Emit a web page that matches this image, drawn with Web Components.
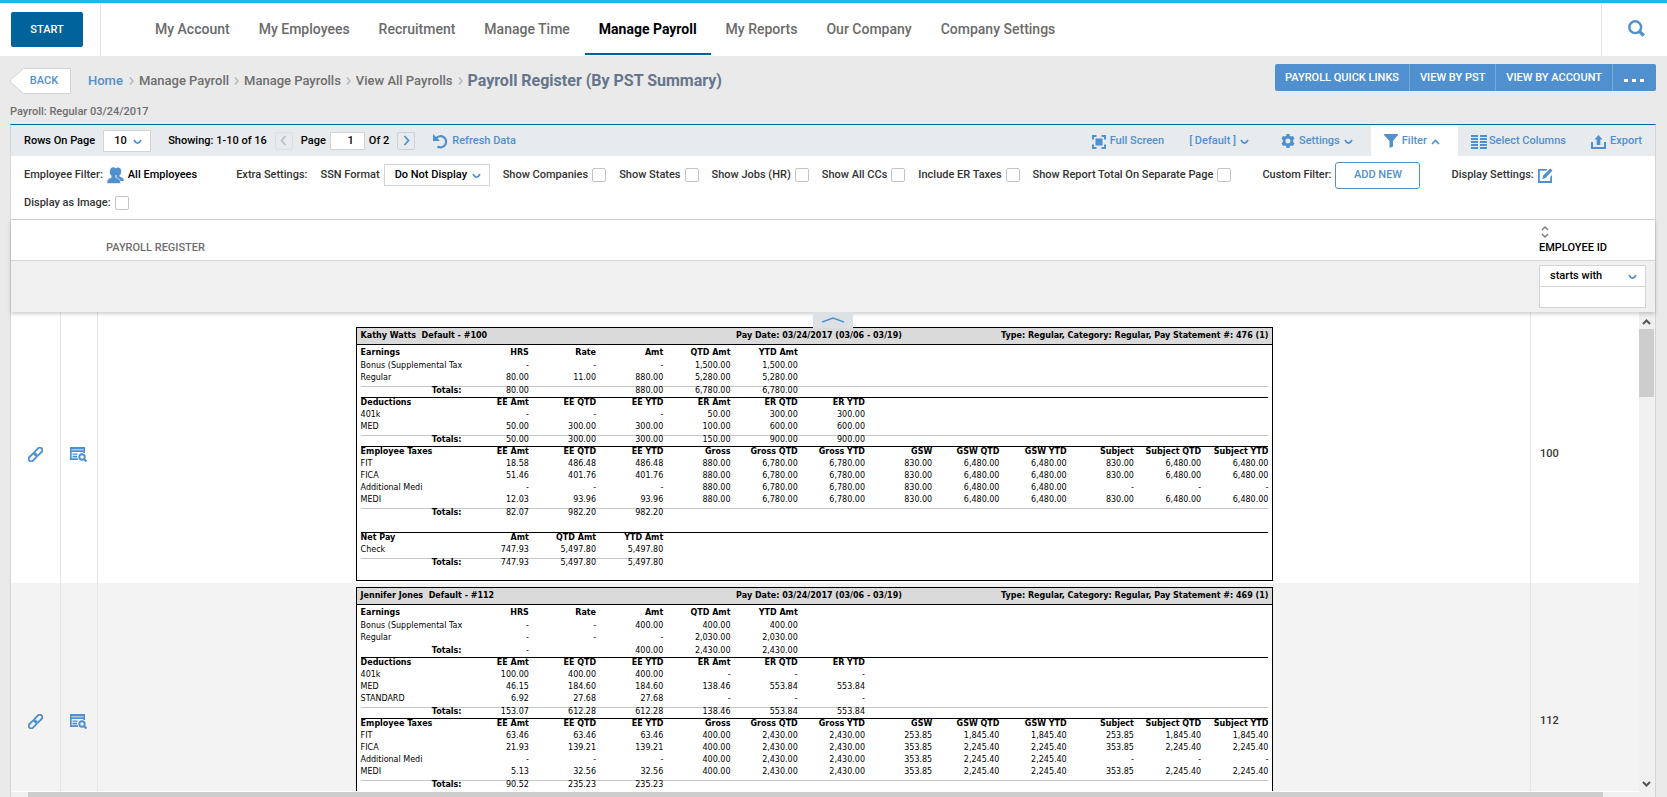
<!DOCTYPE html>
<html lang="en">
<head>
<meta charset="utf-8">
<title>Payroll Register (By PST Summary)</title>
<style>
  :root {
    --blue: #5090cf;
    --navy: #00639b;
    --line: #d4d4d4;
    --page: #eaeaea;
  }
  body {
    margin: 0;
    height: 100vh;
    display: flex;
    flex-direction: column;
    overflow: hidden;
    background: var(--page);
    color: #333;
    font: 500 11px/16px Roboto, "Liberation Sans", sans-serif;
  }
</style>
</head>
<body>
<app-header></app-header>
<page-heading></page-heading>
<report-panel>
  <tool-bar slot="tools"></tool-bar>
  <filter-bar slot="filters"></filter-bar>
  <register-grid></register-grid>
</report-panel>

<script>
function createComponent({ name, styles, template }) {
  customElements.define(name, class extends HTMLElement {
    connectedCallback() {
      if (this.shadowRoot) return;
      const shadow = this.attachShadow({ mode: 'open' });
      const base = `*, *::before { box-sizing: border-box; }
        button, input, select { font: inherit; color: inherit; margin: 0; }
        a { color: inherit; text-decoration: none; }`;
      shadow.innerHTML = `<style>${base}${styles}</style>${template(this)}`;
    }
  });
}

// every icon: [width, height, markup]
const icons = {
  search: [17, 17, '<circle cx="7.200" cy="7.200" r="5.900" fill="none" stroke="currentColor" stroke-width="2.400"/><path d="M11.500 11.500l4.300 4.200" stroke="currentColor" stroke-width="3.200"/>'],
  down: [9, 6, '<path d="M1 1c1 1.800 2 2.800 3.500 3.300C6 3.800 7 2.800 8 1" fill="none" stroke="currentColor" stroke-width="1.700"/>'],
  up: [9, 6, '<path d="M1 5l3.500-3.500L8 5" fill="none" stroke="currentColor" stroke-width="1.600"/>'],
  left: [7, 11, '<path d="M5.500 1L1.500 5.500l4 4.500" fill="none" stroke="currentColor" stroke-width="1.500"/>'],
  right: [7, 11, '<path d="M1.500 1l4 4.500-4 4.500" fill="none" stroke="currentColor" stroke-width="1.800"/>'],
  crumb: [5, 8, '<path d="M1 .5L4 4 1 7.500" fill="none" stroke="currentColor" stroke-width="1.300"/>'],
  refresh: [15, 15, '<path d="M3 4.500A5.600 5.600 0 1 1 4.500 12.500" fill="none" stroke="currentColor" stroke-width="2.200"/><path d="M0 0v7h7z" fill="currentColor"/>'],
  people: [17, 17, '<g fill="currentColor"><ellipse cx="11" cy="4.500" rx="3.200" ry="4"/><path d="M9.500 7h3v2.500c2 .8 4.200 1.200 4.500 4.500H9z"/><g stroke="#fff" stroke-width=".6"><path d="M4.200 8h4.600v2.500c2.500.9 4.600 1.500 4.900 6H-.3c.3-4.500 2-5.100 4.500-6z"/></g><ellipse cx="6.300" cy="4.800" rx="3.600" ry="4.600"/></g>'],
  fullscreen: [14, 14, '<g fill="currentColor"><path d="M0 0h4.500v2H2v2.500H0zM9.500 0H14v4.500h-2V2H9.500zM0 9.500h2V12h2.500v2H0zM12 9.500h2V14H9.500v-2H12z"/><path d="M3.500 3.500h7v7h-7z"/></g>'],
  gear: [14, 14, '<path fill="currentColor" fill-rule="evenodd" d="M5.500 0h3l.4 2 1.200.6L12 2l1.500 2.500L12.200 6v2l1.300 1.500L12 12l-1.900-.6-1.200.6-.4 2h-3l-.4-2-1.200-.6L2 12 .5 9.500 1.800 8V6L.5 4.500 2 2l1.900.6L5.100 2zM7 4.500a2.500 2.500 0 1 0 0 5 2.500 2.500 0 0 0 0-5z"/>'],
  funnel: [14, 14, '<path fill="currentColor" d="M0 0h14v1L9 7v5.500L5.500 14V7L0 1z"/>'],
  columns: [16, 14, '<path fill="currentColor" d="M0 0h7v2H0zM9 0h7v2H9zM0 3h7v2H0zM9 3h7v2H9zM0 6h7v2H0zM9 6h7v2H9zM0 9h7v2H0zM9 9h7v2H9zM0 12h7v2H0zM9 12h7v2H9z"/>'],
  exportUp: [15, 14, '<g fill="currentColor"><path d="M0 7h2v5h11V7h2v7H0z"/><path d="M7.500 0l4 4.500H9.300V10H5.700V4.500H3.500z"/></g>'],
  edit: [15, 15, '<g fill="currentColor"><path d="M0 1h9.500L8 2.700H1.800V13h10.400V9l1.800-2v8H0z"/><path d="M12.300.5l2.200 2-6.700 7.300-3.600 1.500 1-3.700z"/></g>'],
  link: [15, 15, '<g fill="none" stroke="currentColor" stroke-width="1.900"><rect x="-4.600" y="-2.500" width="9.200" height="5" rx="2.500" transform="translate(10.300 4.700) rotate(-45)"/><rect x="-4.600" y="-2.500" width="9.200" height="5" rx="2.500" transform="translate(4.700 10.300) rotate(-45)"/></g>'],
  preview: [17, 15, '<g fill="currentColor"><path d="M0 0h15v6h-1.700V5H1.700v6.300H8V13H0z"/><path d="M2.500 6.500h5v1.300h-5zM2.500 8.700h4.500v1.800H2.500z"/></g><path fill="#fff" d="M1.500 2.300h12v1h-12z" opacity=".75"/><circle cx="12" cy="10" r="2.700" fill="none" stroke="currentColor" stroke-width="1.900"/><path d="M14 12l2.500 2.500" stroke="currentColor" stroke-width="2.200"/>'],
  sort: [8, 12, '<path d="M1 4l3-3 3 3M1 8l3 3 3-3" fill="none" stroke="#777" stroke-width="1.400"/>'],
  handle: [22, 6, '<path d="M0 5l11-4 11 4" fill="none" stroke="currentColor" stroke-width="1.500"/>'],
  back: [61, 26, '<path d="M13.500.5h47v25h-47L1 14.500q-1-1.500 0-3z" fill="#fff" stroke="#d4d4d4"/>']
};

createComponent({
  name: 'ui-icon',
  styles: ':host { display: inline-flex; flex: none; color: var(--blue); }',
  template: el => {
    const [w, h, shape] = icons[el.getAttribute('name')];
    return `<svg width="${w}" height="${h}" viewBox="0 0 ${w} ${h}" aria-hidden="true">${shape}</svg>`;
  }
});

// box with a chevron around a native select passed in the slot
createComponent({
  name: 'select-box',
  styles: `
    :host { display: grid; align-items: center; background: #fff; border: 1px solid var(--line); color: #000; }
    ::slotted(select) { grid-area: 1 / 1; appearance: none; border: 0; background: none; outline: 0;
      width: 100%; height: 20px; padding: 0 18px 0 10px; font: inherit; color: inherit; }
    ui-icon { grid-area: 1 / 1; justify-self: end; margin: 2px 8px 0 0; pointer-events: none; }`,
  template: () => '<slot></slot><ui-icon name="down"></ui-icon>'
});

createComponent({
  name: 'check-option',
  styles: `
    :host { display: flex; align-items: center; }
    label { display: flex; align-items: center; gap: 4px; white-space: nowrap; }
    input { appearance: none; width: 14px; height: 14px; border: 1px solid #c4c4c4; border-radius: 2px; background: #fff; }`,
  template: () => '<label><slot></slot><input type="checkbox"></label>'
});

createComponent({
  name: 'app-header',
  styles: `
    :host { display: flex; flex: none; height: 56px; background: #fff; border-top: 3px solid #18bbe0; box-sizing: border-box; }
    .start { display: flex; align-items: center; padding: 0 17px 0 11px; border-right: 1px solid #dce6ee; }
    button { border: 0; background: none; }
    .start button { width: 72px; height: 35px; border-radius: 2px; background: var(--navy); color: #fff; }
    nav { display: flex; flex: 1; gap: 1px; margin-left: 40px; font-size: 14px; color: #6b6b6b; }
    nav a { display: flex; align-items: center; padding: 2px 14px 0; border-bottom: 2px solid transparent; margin-bottom: 1px; }
    nav a[aria-current] { color: #000; font-weight: 700; border-color: var(--navy); }
    .search { width: 66px; padding: 3px 4px 0 8px; border-left: 1px solid #dce6ee; }`,
  template: () => `
    <div class="start"><button>START</button></div>
    <nav>${['My Account', 'My Employees', 'Recruitment', 'Manage Time', 'Manage Payroll', 'My Reports', 'Our Company', 'Company Settings']
      .map(t => `<a href="#"${t === 'Manage Payroll' ? ' aria-current="page"' : ''}>${t}</a>`).join('')}</nav>
    <button class="search" aria-label="Search"><ui-icon name="search"></ui-icon></button>`
});

createComponent({
  name: 'page-heading',
  styles: `
    :host { display: block; flex: none; padding: 8px 11px 3px 10px; color: #6e6e6e; }
    .row { display: flex; align-items: center; justify-content: space-between; height: 34px; }
    .crumbs { display: flex; align-items: center; gap: 5px; font-size: 13px; }
    .crumbs ui-icon { color: #b5b5b5; }
    .home { margin-right: 1px; color: var(--blue); }
    h1 { margin: 0; font-size: 16px; font-weight: 700; color: #65758b; }
    button { border: 0; background: none; padding: 0; }
    .back { display: grid; align-items: center; margin-right: 12px; font-size: 11px; }
    .back > * { grid-area: 1 / 1; }
    .back span { padding-left: 7px; color: var(--blue); }
    .actions { display: flex; align-self: flex-start; background: var(--blue); color: #fff; border-radius: 2px; }
    .actions button { height: 27px; padding: 0 10px; }
    .actions button + button { border-left: 1px solid #76a8da; }
    .actions .more { display: flex; align-items: flex-end; gap: 4px; width: 44px; padding: 0 11px 9px; }
    .more i { width: 4px; height: 3px; background: #fff; }
    p { margin: 5px 0 0; line-height: 18px; }`,
  template: () => `
    <div class="row">
      <div class="crumbs">
        <button class="back"><ui-icon name="back"></ui-icon><span>BACK</span></button>
        <a class="home" href="#">Home</a><ui-icon name="crumb"></ui-icon>
        <a href="#">Manage Payroll</a><ui-icon name="crumb"></ui-icon>
        <a href="#">Manage Payrolls</a><ui-icon name="crumb"></ui-icon>
        <a href="#">View All Payrolls</a><ui-icon name="crumb"></ui-icon>
        <h1>Payroll Register (By PST Summary)</h1>
      </div>
      <div class="actions">
        <button>PAYROLL QUICK LINKS</button><button>VIEW BY PST</button><button>VIEW BY ACCOUNT</button>
        <button class="more" aria-label="More"><i></i><i></i><i></i></button>
      </div>
    </div>
    <p>Payroll: Regular 03/24/2017</p>`
});

createComponent({
  name: 'report-panel',
  styles: `
    :host { display: flex; flex: 1; min-height: 0; flex-direction: column; margin: 0 11px 0 10px; background: #fff;
      border: solid var(--line); border-width: 0 1px; border-top: 1px solid var(--navy); }`,
  template: () => '<slot name="tools"></slot><slot name="filters"></slot><slot></slot>'
});

createComponent({
  name: 'tool-bar',
  styles: `
    :host { display: flex; flex: none; height: 31px; align-items: center; padding: 0 13px; background: #e7ebee; color: #000;
      line-height: 18px; white-space: nowrap; }
    select-box { width: 48px; margin: 0 17px 0 4px; }
    button { display: flex; align-items: center; gap: 4px; padding: 1px 0 0; border: 0; background: none; color: var(--blue); }
    .page { width: 18px; height: 18px; padding: 0; justify-content: center; border: 1px solid #ccd2d8; border-radius: 2px; margin-left: 8px; }
    .page[disabled] { border-color: #dde0e3; margin-right: 8px; }
    .page[disabled] ui-icon { color: #bbb; }
    label { display: flex; align-items: center; gap: 4px; margin-right: 4px; }
    span, label { padding-top: 1px; }
    input { width: 35px; height: 18px; padding: 0 10px 0 0; border: 1px solid var(--line); background: #fff; text-align: right; }
    .refresh { margin-left: 18px; }
    .right { display: flex; align-self: stretch; margin-left: auto; gap: 25px; }
    .right ui-icon:last-child { margin-top: 2px; }
    .settings { margin-left: 7px; }
    .tab { background: #fff; padding: 1px 18px 0 13px; margin: 0 -12px 0 -7px; }
    .columns { gap: 2px; }`,
  template: () => `
    <label for="rows">Rows On Page</label>
    <select-box><select id="rows"><option>10</option></select></select-box>
    <span>Showing: 1-10 of 16</span>
    <button class="page" disabled aria-label="Previous page"><ui-icon name="left"></ui-icon></button>
    <label>Page <input value="1"></label>
    <span>Of 2</span>
    <button class="page" aria-label="Next page"><ui-icon name="right"></ui-icon></button>
    <button class="refresh"><ui-icon name="refresh"></ui-icon>Refresh Data</button>
    <div class="right">
      <button><ui-icon name="fullscreen"></ui-icon>Full Screen</button>
      <button>[ Default ] <ui-icon name="down"></ui-icon></button>
      <button class="settings"><ui-icon name="gear"></ui-icon>Settings <ui-icon name="down"></ui-icon></button>
      <button class="tab"><ui-icon name="funnel"></ui-icon>Filter <ui-icon name="up"></ui-icon></button>
      <button class="columns"><ui-icon name="columns"></ui-icon>Select Columns</button>
      <button><ui-icon name="exportUp"></ui-icon>Export</button>
    </div>`
});

createComponent({
  name: 'filter-bar',
  styles: `
    :host { display: flex; flex: none; flex-wrap: wrap; align-items: center; gap: 0 13px; padding: 5px 13px 2px;
      border-bottom: 1px solid var(--line); color: #333; white-space: nowrap; }
    .group, check-option { min-height: 28px; }
    .group { display: flex; align-items: center; gap: 4px; }
    .wide { margin-right: 26px; }
    .all { color: #000; display: flex; align-items: center; gap: 4px; }
    select-box { width: 106px; }
    .add { height: 27px; width: 85px; background: #fff; border: 1px solid var(--blue); border-radius: 3px; color: var(--blue); }
    .edit { display: flex; padding: 0; border: 0; background: none; }
    .custom { margin: 0 18px; }`,
  template: () => `
    <div class="group wide">Employee Filter: <a class="all" href="#"><ui-icon name="people"></ui-icon>All Employees</a></div>
    <div class="group">Extra Settings:</div>
    <div class="group"><label for="ssn">SSN Format</label>
      <select-box><select id="ssn"><option>Do Not Display</option></select></select-box></div>
    <check-option>Show Companies</check-option>
    <check-option>Show States</check-option>
    <check-option>Show Jobs (HR)</check-option>
    <check-option>Show All CCs</check-option>
    <check-option>Include ER Taxes</check-option>
    <check-option>Show Report Total On Separate Page</check-option>
    <div class="group custom">Custom Filter: <button class="add">ADD NEW</button></div>
    <div class="group">Display Settings: <button class="edit" aria-label="Display settings"><ui-icon name="edit"></ui-icon></button></div>
    <check-option>Display as Image:</check-option>`
});

// Column heads of each kind of section; heads and rows are written "name|v1|v2|..."
const heads = {
  earn: 'Earnings|HRS|Rate|Amt|QTD Amt|YTD Amt',
  ded: 'Deductions|EE Amt|EE QTD|EE YTD|ER Amt|ER QTD|ER YTD',
  tax: 'Employee Taxes|EE Amt|EE QTD|EE YTD|Gross|Gross QTD|Gross YTD|GSW|GSW QTD|GSW YTD|Subject|Subject QTD|Subject YTD',
  net: 'Net Pay|Amt|QTD Amt|YTD Amt'
};
const statements = [
  {
    id: 100, name: 'Kathy Watts', statement: 476,
    sections: [
      { kind: 'earn', rows: ['Bonus (Supplemental Tax|-|-|-|1,500.00|1,500.00', 'Regular|80.00|11.00|880.00|5,280.00|5,280.00'],
        totals: '80.00||880.00|6,780.00|6,780.00' },
      { kind: 'ded', rows: ['401k|-|-|-|50.00|300.00|300.00', 'MED|50.00|300.00|300.00|100.00|600.00|600.00'],
        totals: '50.00|300.00|300.00|150.00|900.00|900.00' },
      { kind: 'tax', rows: [
          'FIT|18.58|486.48|486.48|880.00|6,780.00|6,780.00|830.00|6,480.00|6,480.00|830.00|6,480.00|6,480.00',
          'FICA|51.46|401.76|401.76|880.00|6,780.00|6,780.00|830.00|6,480.00|6,480.00|830.00|6,480.00|6,480.00',
          'Additional Medi|-|-|-|880.00|6,780.00|6,780.00|830.00|6,480.00|6,480.00|-|-|-',
          'MEDI|12.03|93.96|93.96|880.00|6,780.00|6,780.00|830.00|6,480.00|6,480.00|830.00|6,480.00|6,480.00'],
        totals: '82.07|982.20|982.20' },
      { kind: 'net', rows: ['Check|747.93|5,497.80|5,497.80'], totals: '747.93|5,497.80|5,497.80' }
    ]
  },
  {
    id: 112, name: 'Jennifer Jones', statement: 469,
    sections: [
      { kind: 'earn', plain: true, rows: ['Bonus (Supplemental Tax|-|-|400.00|400.00|400.00', 'Regular|-|-|-|2,030.00|2,030.00'],
        totals: '-||400.00|2,430.00|2,430.00' },
      { kind: 'ded', rows: ['401k|100.00|400.00|400.00|-|-|-', 'MED|46.15|184.60|184.60|138.46|553.84|553.84', 'STANDARD|6.92|27.68|27.68|-|-|-'],
        totals: '153.07|612.28|612.28|138.46|553.84|553.84' },
      { kind: 'tax', rows: [
          'FIT|63.46|63.46|63.46|400.00|2,430.00|2,430.00|253.85|1,845.40|1,845.40|253.85|1,845.40|1,845.40',
          'FICA|21.93|139.21|139.21|400.00|2,430.00|2,430.00|353.85|2,245.40|2,245.40|353.85|2,245.40|2,245.40',
          'Additional Medi|-|-|-|400.00|2,430.00|2,430.00|353.85|2,245.40|2,245.40|-|-|-',
          'MEDI|5.13|32.56|32.56|400.00|2,430.00|2,430.00|353.85|2,245.40|2,245.40|353.85|2,245.40|2,245.40'],
        totals: '90.52|235.23|235.23' }
    ]
  }
];

function cells(line, tag) {
  const values = line.split('|');
  let html = '';
  for (let i = 0; i < 13; i++) html += `<${tag}>${values[i] || ''}</${tag}>`;
  return html;
}

createComponent({
  name: 'pay-statement',
  styles: `
    :host { display: block; background: #fff; border: 1px solid #000; text-align: left;
      color: #000; font: 400 8px/10px "DejaVu Sans", Verdana, sans-serif; white-space: nowrap; }
    header { display: grid; grid-template-columns: 32fr 38fr 31fr; height: 17px; padding: 0 4px; align-items: center;
      background: #dadada; border-bottom: 1px solid #000; font-weight: 700; white-space: pre; }
    header span:nth-child(2) { text-align: center; }
    header span:nth-child(3) { justify-self: end; }
    .body { padding: 0 4px 11px; }
    table { width: 100%; table-layout: fixed; border-collapse: separate; border-spacing: 0; }
    th, td { padding: 0; text-align: right; vertical-align: top; height: 12px; line-height: 12px; }
    th:first-child, td:first-child { width: 101px; text-align: left; }
    thead th { border-top: 1px solid #000; line-height: 10px; }
    .earn thead th { border: 0; height: 15px; padding-top: 3px; }
    .net { margin-top: 13px; }
    tbody tr:last-child td { height: 14px; }
    tfoot td { height: 11px; line-height: 8px; border-top: 1px solid #c6c6c6; }
    tfoot td:first-child { text-align: right; font-weight: 700; }
    .plain tfoot td { border-color: transparent; }
    .net tfoot td:nth-child(n+5) { border-color: transparent; }`,
  template: el => {
    const s = statements[el.getAttribute('index')];
    return `
      <header><span>${s.name}  Default - #${s.id}</span><span>Pay Date: 03/24/2017 (03/06 - 03/19)</span><span>Type: Regular, Category: Regular, Pay Statement #: ${s.statement} (1)</span></header>
      <div class="body">${s.sections.map(t => `
        <table class="${t.kind}${t.plain ? ' plain' : ''}">
          <thead><tr>${cells(heads[t.kind], 'th')}</tr></thead>
          <tbody>${t.rows.map(r => `<tr>${cells(r, 'td')}</tr>`).join('')}</tbody>
          <tfoot><tr>${cells('Totals:|' + t.totals, 'td')}</tr></tfoot>
        </table>`).join('')}
      </div>`;
  }
});

createComponent({
  name: 'register-grid',
  styles: `
    :host { display: flex; flex: 1; min-height: 0; flex-direction: column; }
    table { width: 100%; table-layout: fixed; border-collapse: separate; border-spacing: 0; }
    .link { width: 49px; }
    .view { width: 37px; }
    th, td { padding: 0; text-align: left; font-weight: 500; }
    .head { flex: none; z-index: 1; box-shadow: 0 2px 4px rgba(0, 0, 0, .2); }
    .head th { height: 41px; padding: 0 0 4px; vertical-align: bottom; background: #fff; border-bottom: 1px solid var(--line); color: #6e6e6e; }
    .head th.name { padding-left: 9px; }
    .head .id { width: 125px; padding-left: 9px; }
    .head th.id { color: #000; }
    .sort { display: flex; margin: 0 0 2px 2px; }
    .head td { height: 51px; background: #f0f0f0; }
    .head select-box { width: 107px; }
    .match { display: block; width: 107px; height: 21px; border: 1px solid var(--line); border-top: 0; }
    .body { display: flex; flex: 1; min-height: 0; position: relative; }
    .scroll { flex: 1; overflow: hidden; border-bottom: 1px solid #fff; }
    .scroll td { padding: 4px 0 2px 1px; border-left: 1px solid #e6e6e6; text-align: center; }
    .scroll td:first-child { border: 0; }
    .scroll tr:first-child td { padding-top: 15px; }
    .scroll tr:nth-child(even) td { background: #f3f3f3; }
    .scroll td.id { width: 109px; padding-left: 9px; text-align: left; }
    .scroll a { display: flex; justify-content: center; padding-right: 2px; }
    pay-statement { box-sizing: content-box; width: 64%; margin: 0 auto; }
    tr:nth-child(even) pay-statement { min-height: 266px; }
    .handle { position: absolute; z-index: 1; top: 0; left: 50%; margin-left: -20px; width: 40px; height: 16px; padding: 0;
      border: 0; background: #dce1e6; display: flex; align-items: center; justify-content: center; }
    .vbar { width: 16px; display: flex; flex-direction: column; background: #f0f0f0; padding: 7px 1px 5px 0; }
    .vbar i { height: 68px; margin: 4px 0 auto; background: #cdcdcd; }
    .vbar svg { align-self: center; }
    .hbar { flex: none; height: 5px; display: flex; background: #f0f0f0; padding: 0 52px 0 17px; }
    .hbar i { flex: 1; background: #cdcdcd; }`,
  template: () => `
    <div class="head"><table>
      <thead><tr><th class="link"></th><th class="view"></th><th class="name">PAYROLL REGISTER</th>
        <th class="id"><ui-icon class="sort" name="sort"></ui-icon>EMPLOYEE ID</th></tr></thead>
      <tbody><tr><td></td><td></td><td></td><td class="id">
        <select-box><select aria-label="Match type"><option>starts with</option></select></select-box>
        <input class="match" aria-label="Employee ID"></td></tr></tbody>
    </table></div>
    <div class="body">
      <button class="handle" aria-label="Collapse filters"><ui-icon name="handle"></ui-icon></button>
      <div class="scroll"><table>${statements.map((s, i) => `
        <tr><td class="link"><a href="#" aria-label="Open"><ui-icon name="link"></ui-icon></a></td>
          <td class="view"><a href="#" aria-label="Preview"><ui-icon name="preview"></ui-icon></a></td>
          <td><pay-statement index="${i}"></pay-statement></td><td class="id">${s.id}</td></tr>`).join('')}
      </table></div>
      <div class="vbar">
        <svg width="9" height="6"><path d="M1 5l3.500-3.500L8 5" fill="none" stroke="#555" stroke-width="2"/></svg>
        <i></i>
        <svg width="9" height="6"><path d="M1 1l3.500 3.500L8 1" fill="none" stroke="#555" stroke-width="2"/></svg>
      </div>
    </div>
    <div class="hbar"><i></i></div>`
});
</script>
</body>
</html>
